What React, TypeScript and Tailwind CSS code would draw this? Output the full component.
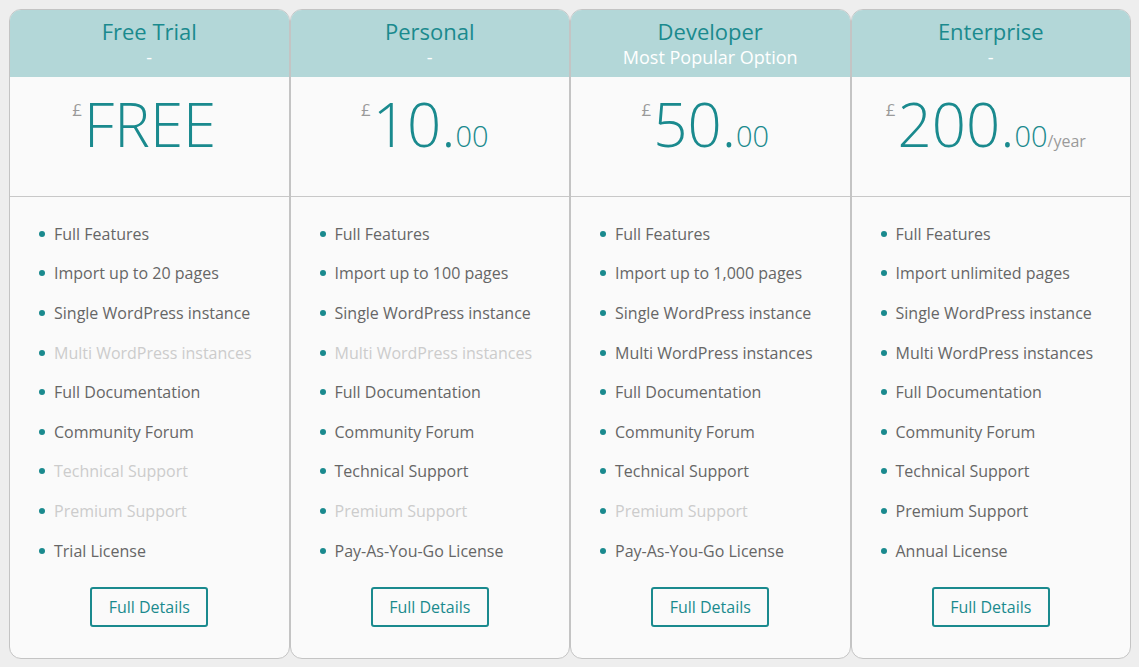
import React from "react";

type Feature = { text: string; off?: boolean };
type Plan = {
  name: string;
  sub: string;
  whole: string;
  cents?: string;
  suffix?: string;
  features: Feature[];
};

const plans: Plan[] = [
  {
    name: "Free Trial",
    sub: "-",
    whole: "FREE",
    features: [
      { text: "Full Features" },
      { text: "Import up to 20 pages" },
      { text: "Single WordPress instance" },
      { text: "Multi WordPress instances", off: true },
      { text: "Full Documentation" },
      { text: "Community Forum" },
      { text: "Technical Support", off: true },
      { text: "Premium Support", off: true },
      { text: "Trial License" },
    ],
  },
  {
    name: "Personal",
    sub: "-",
    whole: "10.",
    cents: "00",
    features: [
      { text: "Full Features" },
      { text: "Import up to 100 pages" },
      { text: "Single WordPress instance" },
      { text: "Multi WordPress instances", off: true },
      { text: "Full Documentation" },
      { text: "Community Forum" },
      { text: "Technical Support" },
      { text: "Premium Support", off: true },
      { text: "Pay-As-You-Go License" },
    ],
  },
  {
    name: "Developer",
    sub: "Most Popular Option",
    whole: "50.",
    cents: "00",
    features: [
      { text: "Full Features" },
      { text: "Import up to 1,000 pages" },
      { text: "Single WordPress instance" },
      { text: "Multi WordPress instances" },
      { text: "Full Documentation" },
      { text: "Community Forum" },
      { text: "Technical Support" },
      { text: "Premium Support", off: true },
      { text: "Pay-As-You-Go License" },
    ],
  },
  {
    name: "Enterprise",
    sub: "-",
    whole: "200.",
    cents: "00",
    suffix: "/year",
    features: [
      { text: "Full Features" },
      { text: "Import unlimited pages" },
      { text: "Single WordPress instance" },
      { text: "Multi WordPress instances" },
      { text: "Full Documentation" },
      { text: "Community Forum" },
      { text: "Technical Support" },
      { text: "Premium Support" },
      { text: "Annual License" },
    ],
  },
];

function Card({ plan }: { plan: Plan }) {
  return (
    <div className="flex-1 flex flex-col border border-[#c4c4c4] rounded-[12px] bg-[#fafafa] overflow-hidden">
      <div className="h-[67px] bg-[#b3d7d8] flex flex-col items-center pt-[6px]">
        <div className="text-[22px] leading-[30px] text-[#1a8a8e]">{plan.name}</div>
        <div className="text-[18px] leading-[22px] text-white">{plan.sub}</div>
      </div>
      <div className="h-[120px] border-b border-[#c8c8c8] flex justify-center pt-[7px] pr-[10px]">
        <div className="flex items-baseline text-[#1a8a8e]">
          <span className="self-start text-[17px] leading-[17px] text-[#9a9a9a] mt-[17px] mr-[2px]">£</span>
          <span className="text-[60px] leading-[80px] font-light">{plan.whole}</span>
          {plan.cents && <span className="text-[29px] font-light">{plan.cents}</span>}
          {plan.suffix && <span className="text-[16px] text-[#9a9a9a]">{plan.suffix}</span>}
        </div>
      </div>
      <ul className="pt-[17px] pl-[29px]">
        {plan.features.map((f) => (
          <li key={f.text} className="h-[39.6px] flex items-center">
            <span className="w-[6px] h-[6px] rounded-full bg-[#1a8a8e] mr-[9px]" />
            <span className={"text-[16px] " + (f.off ? "text-[#cccccc]" : "text-[#666666]")}>{f.text}</span>
          </li>
        ))}
      </ul>
      <div className="flex justify-center pt-[17px]">
        <button className="h-[40px] w-[118px] border-2 border-[#1a8a8e] rounded-[3px] text-[16px] text-[#1a8a8e] bg-transparent">
          Full Details
        </button>
      </div>
    </div>
  );
}

export default function App() {
  return (
    <div
      className="w-[1139px] h-[667px] bg-[#eeeeee] pl-[9px] pr-[8px] pt-[9px] pb-[8px] flex"
      style={{ fontFamily: '"Open Sans", "Noto Sans", sans-serif' }}
    >
      {plans.map((p) => (
        <Card key={p.name} plan={p} />
      ))}
    </div>
  );
}
